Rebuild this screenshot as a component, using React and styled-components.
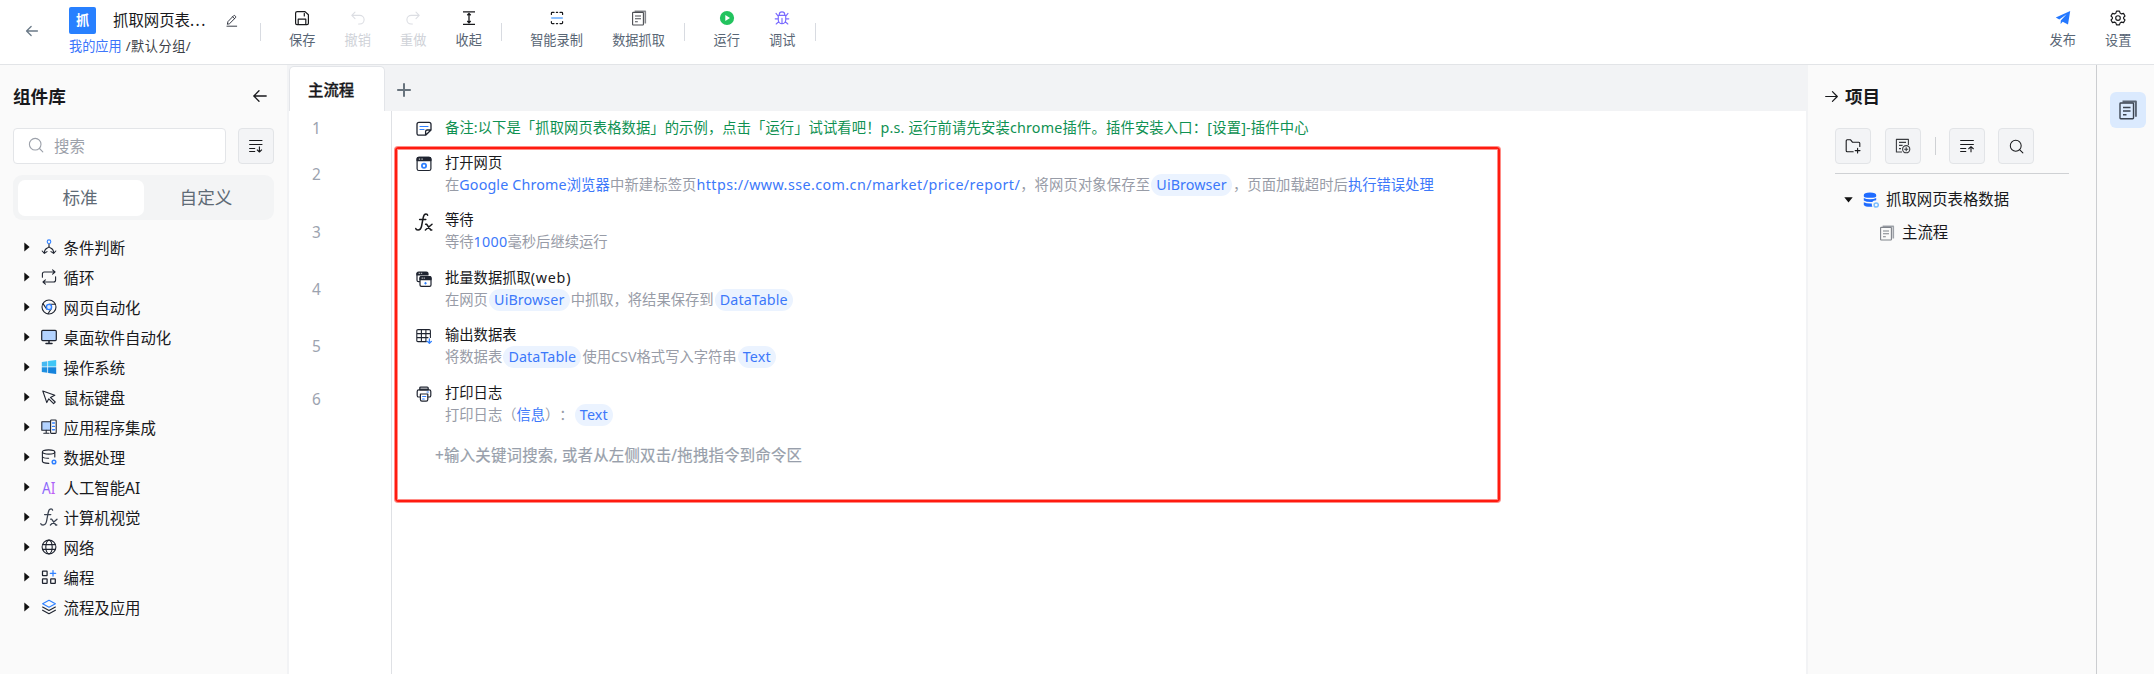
import React from "react";
import styled, { createGlobalStyle } from "styled-components";

const GlobalStyle = createGlobalStyle`
  * { box-sizing: border-box; }
  body {
    margin: 0;
    overflow: hidden;
    background: #fff;
    color: #18191c;
    font-family: "Noto Sans", "Noto Sans CJK SC", sans-serif;
    font-size: 15.4px;
    text-spacing-trim: space-all;
  }
  svg { display: block; flex: none; }
`;

const ink = "#1f2430";
const blue = "#2f80ff";

/* ---------- icons ---------- */

const Svg = ({ size = 16, box = 16, children, ...rest }) => (
  <svg
    width={size}
    height={size}
    viewBox={`0 0 ${box} ${box}`}
    fill="none"
    stroke="currentColor"
    strokeWidth="1.1"
    strokeLinecap="round"
    strokeLinejoin="round"
    {...rest}
  >
    {children}
  </svg>
);

const ArrowLeft = (p) => (
  <Svg {...p}><path d="M14.2 8H2M7 2.8L1.8 8L7 13.2" /></Svg>
);
const ArrowRight = (p) => (
  <Svg {...p}><path d="M1.8 8H14M9 2.8L14.2 8L9 13.2" /></Svg>
);
const PencilIcon = () => (
  <Svg size={13} stroke={ink}>
    <path d="M3 12.2L3.6 9.4L10.6 2.1Q11.4 1.4 12.2 2.1L13 2.9Q13.7 3.7 13 4.5L5.9 11.6Z M9.4 3.4L11.8 5.8M2.4 15H14.4" />
  </Svg>
);
const SaveIcon = () => (
  <Svg stroke="#18191c" strokeWidth="1.2">
    <path d="M3.2 1.6H11L14.4 4.8V13.2Q14.4 14.6 13 14.6H3Q1.6 14.6 1.6 13.2V3Q1.6 1.6 3.2 1.6Z" />
    <path d="M4.2 14.4V9.2H11.8V14.4M10.3 3.4V6" />
  </Svg>
);
const UndoIcon = () => (
  <Svg stroke="#dcdee3"><path d="M5 2.2L1.8 5.4L5 8.6M2 5.4H9.8A4.3 4.3 0 0 1 9.8 14H8.6" /></Svg>
);
const RedoIcon = () => (
  <Svg stroke="#dcdee3"><path d="M11 2.2L14.2 5.4L11 8.6M14 5.4H6.2A4.3 4.3 0 0 0 6.2 14H7.4" /></Svg>
);
const CollapseIcon = () => (
  <Svg stroke="#18191c" strokeWidth="1.3" strokeLinecap="butt">
    <path d="M2 1.8H14M2 14.4H14M8 3.4V12.8M6.3 5.2L8 3.4L9.7 5.2M6.3 11L8 12.8L9.7 11" />
  </Svg>
);
const RecordIcon = () => (
  <Svg stroke="#18191c" strokeWidth="1.2">
    <path d="M2.4 4.4V3.2Q2.4 2.4 3.2 2.4H5M11 2.4H12.8Q13.6 2.4 13.6 3.2V4.4M2.4 11.6V12.8Q2.4 13.6 3.2 13.6H5M11 13.6H12.8Q13.6 13.6 13.6 12.8V11.6M7.4 2.4H8.6M7.4 13.6H8.6" />
    <path d="M3 8H13" stroke="#8cc0ff" strokeWidth="2.2" />
  </Svg>
);
const DocsIcon = ({ size = 16, color = "#4b4d52", shade = "#85878c" }) => (
  <Svg size={size} stroke={color} strokeLinecap="butt" strokeWidth="1.1">
    <path d="M3.6 1.2H14.3V13.4" stroke={shade} strokeWidth="1.6" />
    <rect x="1.6" y="2.4" width="10.8" height="12.6" rx="0.6" />
    <path d="M4 6H10M4 8.8H10M4 11.8H6.8" />
  </Svg>
);
const PlayIcon = () => (
  <Svg stroke="none"><circle cx="8" cy="8" r="7.1" fill="#22c35e" /><path d="M6.3 4.9L11 8L6.3 11.1Z" fill="#fff" /></Svg>
);
const BugIcon = () => (
  <Svg stroke="#7a6bff" strokeWidth="1.15">
    <path d="M5.3 5V4.6A2.7 2.7 0 0 1 10.7 4.6V5M4.3 5.4H11.7V10A3.7 3.7 0 0 1 4.3 10ZM8 8.4V13.6M4.2 8.8H1.2M14.8 8.8H11.8M4.2 6.2L2 3.4M11.8 6.2L14 3.4M4.8 11.6L2.2 14M11.2 11.6L13.8 14" />
  </Svg>
);
const SendIcon = () => (
  <Svg stroke="none"><path d="M15.2 1L0.8 7.4L4.3 9.6L11.6 4.3L5.8 10.4L5.6 14L7.7 11.8L13 14.4Z" fill="#2478ff" /></Svg>
);
const GearIcon = () => (
  <Svg stroke="#18191c" strokeWidth="1.15">
    <path d="M6.5 1.1H9.5L10.1 3.1L11.5 3.9L13.5 3.4L15 6L13.6 7.4V8.6L15 10L13.5 12.6L11.5 12.1L10.1 12.9L9.5 14.9H6.5L5.9 12.9L4.5 12.1L2.5 12.6L1 10L2.4 8.6V7.4L1 6L2.5 3.4L4.5 3.9L5.9 3.1Z" />
    <circle cx="8" cy="8" r="2.3" />
  </Svg>
);
const SearchIcon = (p) => (
  <Svg {...p}><circle cx="7.2" cy="7.2" r="5.8" /><path d="M11.5 11.5L14.8 14.8" /></Svg>
);
const SortDownIcon = () => (
  <Svg stroke="#18191c" strokeLinecap="butt">
    <path d="M1.2 2.5H14.4M1.2 6.5H14.4M1.2 10.5H7.2M1.2 13.5H7.2M11.4 8.4V14M8.9 11.6L11.4 14L13.9 11.6" />
  </Svg>
);
const SortUpIcon = () => (
  <Svg stroke="#18191c" strokeLinecap="butt">
    <path d="M1.2 2.5H14.8M1.2 6.5H14.8M1.2 10.5H7.2M1.2 13.5H7.2M12 14.2V8.6M9.4 11L12 8.6L14.6 11" />
  </Svg>
);
const FolderPlusIcon = () => (
  <Svg stroke="#18191c">
    <path d="M8.2 13.8H2.2Q1.2 13.8 1.2 12.8V2.8Q1.2 1.8 2.2 1.8H5.6L7.4 4.2H13.8Q14.8 4.2 14.8 5.2V8.4M12.6 10.2V15M10.2 12.6H15" />
  </Svg>
);
const DocPlusIcon = () => (
  <Svg stroke="#3a3c40" strokeLinecap="butt">
    <path d="M7 14H1.4V1.4H13.4V7M4 4.4H11M4 7.4H7.6M4 10.6H6" />
    <circle cx="11.2" cy="11.2" r="3.6" />
    <path d="M9.2 11.2H13.2M11.2 9.2V13.2" />
  </Svg>
);
const DatabaseIcon = () => (
  <Svg stroke="none">
    <path d="M0.8 3Q0.8 0.4 7 0.4T13.2 3V4.2Q13.2 5.8 7 5.8T0.8 4.2Z M0.8 6Q3 7.2 7 7.2T13.2 6V8.2Q10 8.2 9.2 10Q3.4 10.2 0.8 8.4Z M0.8 10.2Q3.6 11.6 8.8 11.4Q8.6 13.4 9.4 14.8Q2 15.2 0.8 13Z" fill="#1f6bff" />
    <circle cx="13.2" cy="13" r="2.1" stroke="#79bdff" strokeWidth="1.5" fill="none" />
  </Svg>
);

const BranchIcon = () => (
  <Svg stroke={ink}>
    <path d="M8 4.8V7.2Q8 8.4 6.4 9Q3.4 10.2 3.4 13.8M8 7.2Q8 8.4 9.6 9Q12.6 10.2 12.6 13.8M1.2 12L3.4 14.4L6 12.6M10 12.6L12.6 14.4L14.8 12" />
    <circle cx="8" cy="2.7" r="1.8" stroke={blue} />
  </Svg>
);
const LoopIcon = () => (
  <Svg stroke={ink}>
    <path d="M1.4 8.2V5Q1.4 3 3.4 3H13.8M11.6 0.9L14 3L11.6 5.2M14.6 7.8V11Q14.6 13 12.6 13H2.2M4.4 10.8L2 13L4.4 15.1" />
  </Svg>
);
const ChromeIcon = () => (
  <Svg stroke={ink}>
    <circle cx="8" cy="8" r="7" />
    <path d="M2 4.6L5.6 10M14.4 5.3H8M7 14.8L10.3 9.6" />
    <circle cx="8" cy="8" r="2.6" stroke={blue} strokeWidth="1.4" fill="#dbeaff" />
  </Svg>
);
const MonitorIcon = () => (
  <Svg stroke={ink} strokeWidth="1.2">
    <rect x="0.7" y="1.4" width="14.6" height="10.2" rx="1" fill="#b3d3ff" />
    <path d="M8 12V14.2M5 14.4H11" strokeWidth="1.5" />
  </Svg>
);
const WindowsIcon = () => (
  <Svg stroke="none">
    <path d="M0.8 3L6.3 2.2V7.6H0.8Z" fill="#45b9f2" />
    <path d="M7.1 2.1L15.2 1V7.6H7.1Z" fill="#3fc6f6" />
    <path d="M0.8 8.3H6.3V13.8L0.8 13Z" fill="#1e8fe0" />
    <path d="M7.1 8.3H15.2V15L7.1 13.9Z" fill="#1583dc" />
  </Svg>
);
const CursorIcon = () => (
  <Svg stroke={ink}><path d="M1.8 2L13.8 6.2L9.4 8.4L14.2 13L12.6 14.6L7.8 9.8L5.8 13.6Z" /></Svg>
);
const AppsIcon = () => (
  <Svg stroke={ink}>
    <path d="M9.4 11.2H0.8V2.8H9.4" fill="#b3d3ff" />
    <path d="M5.2 11.4V14M2.8 14.2H8" />
    <rect x="9.6" y="1" width="5.6" height="13.4" rx="0.8" />
    <path d="M11.6 4H13.4M11.6 7.4H13.4M11.6 10.8H13.4" stroke={blue} strokeWidth="1.4" />
  </Svg>
);
const DataIcon = () => (
  <Svg stroke={ink}>
    <ellipse cx="7.6" cy="3" rx="6.2" ry="2.1" />
    <path d="M1.4 3V12.4Q1.6 14 7.8 14.4M13.8 3V8M1.4 7.6Q2.2 9.4 7.6 9.2" />
    <circle cx="13" cy="13" r="1.8" stroke={blue} strokeWidth="1.5" />
  </Svg>
);
const AiIcon = () => (
  <svg width="16" height="28" viewBox="0 0 16 28">
    <defs>
      <linearGradient id="ai" x1="0" y1="0" x2="1" y2="0.6">
        <stop offset="0" stopColor="#5b6cff" />
        <stop offset="1" stopColor="#c45cf5" />
      </linearGradient>
    </defs>
    <text x="1" y="20.5" fontSize="17" textLength="13.4" lengthAdjust="spacingAndGlyphs" fill="url(#ai)" fontFamily="Noto Sans, sans-serif">AI</text>
  </svg>
);
const FunctionIcon = ({ color = "#18191c", width = 1.5, ...rest }) => (
  <Svg size={18} box={18} stroke={color} strokeWidth={width} {...rest}>
    <path d="M12.6 2.2Q12.4 0.9 11 0.9Q8.9 0.9 8.2 4.6L6.6 13Q5.8 17 3 17Q1 17 0.8 15.6M4.6 6.6H10.8" />
    <path d="M10.6 11.2H11.6L15.8 17H16.8M17 11.2L10.4 17" />
  </Svg>
);
const GlobeIcon = () => (
  <Svg stroke={ink}>
    <circle cx="8" cy="8" r="6.9" />
    <ellipse cx="8" cy="8" rx="3.2" ry="6.9" />
    <path d="M1.6 5.6H14.4M1.6 10.4H14.4" />
  </Svg>
);
const BlocksIcon = () => (
  <Svg stroke={ink} strokeWidth="1.25">
    <rect x="1.5" y="2" width="4.6" height="4.6" rx="0.4" />
    <rect x="1.5" y="9.8" width="4.6" height="4.6" rx="0.4" />
    <rect x="9.7" y="9.8" width="4.6" height="4.6" rx="0.4" />
    <path d="M12 1.6V7M9.3 4.3H14.7" stroke={blue} />
  </Svg>
);
const LayersIcon = () => (
  <Svg stroke={ink}>
    <path d="M8 1.2L14.4 4.7L8 8.2L1.6 4.7Z" stroke={blue} />
    <path d="M1.6 8L8 11.5L14.4 8M1.6 11.2L8 14.7L14.4 11.2" />
  </Svg>
);

const NoteIcon = () => (
  <Svg stroke={ink} strokeWidth="1.3">
    <path d="M9.6 14.2H3Q1 14.2 1 12.2V3.4Q1 1.4 3 1.4H13Q15 1.4 15 3.4V9L9.6 14.2Z M9.6 14V10.6Q9.6 9 11.2 9H14.8" />
    <path d="M4 5.5H12M4 8.5H8" stroke={blue} strokeWidth="1.2" />
  </Svg>
);
const WebPageIcon = () => (
  <Svg stroke={ink} strokeWidth="1.2">
    <rect x="1.1" y="1.3" width="13.8" height="13.2" rx="1.8" />
    <path d="M1.1 4.6V3Q1.1 1.3 2.9 1.3H13.1Q14.9 1.3 14.9 3V4.6Z" fill={ink} />
    <path d="M3.2 3.1H3.8M5.8 3.1H6.4" stroke="#fff" strokeWidth="0.9" />
    <circle cx="8" cy="9.8" r="2.1" stroke={blue} strokeWidth="1.8" />
  </Svg>
);
const BatchIcon = () => (
  <Svg stroke={ink} strokeWidth="1.2">
    <path d="M3.6 10.6H2.6Q1 10.6 1 9.2V2.4" />
    <path d="M1 3.9V2.4Q1 1 2.6 1H10.4Q12 1 12 2.4V3.9Z" fill={ink} />
    <rect x="4" y="5.6" width="11" height="9.8" rx="1.4" fill="#fff" />
    <path d="M4 8.6V7Q4 5.6 5.4 5.6H13.4Q15 5.6 15 7V8.6Z" fill={ink} />
    <path d="M3 2.3H3.6M5.2 2.3H5.8M6 7.1H6.6M8 7.1H8.6" stroke="#fff" strokeWidth="0.8" />
    <path d="M9.5 10.8L10.9 12.3L9.5 13.7L8.1 12.3Z" stroke="none" fill={blue} />
  </Svg>
);
const TableIcon = () => (
  <Svg stroke={ink} strokeWidth="1.1">
    <path d="M10.4 13.6H2Q0.8 13.6 0.8 12.4V2.8Q0.8 1.6 2 1.6H13.2Q14.4 1.6 14.4 2.8V9.4M0.8 5.6H14.4M0.8 9.6H12M5.4 1.6V13.4M9.9 1.6V13.4" />
    <path d="M13.4 10.8V15.2M11.4 13.4L13.4 15.3L15.4 13.4" stroke={blue} strokeWidth="1.3" />
  </Svg>
);
const PrinterIcon = () => (
  <Svg stroke={ink} strokeWidth="1.2">
    <path d="M3.8 3.8V2Q3.8 1 4.8 1H11.2Q12.2 1 12.2 2V3.8Z" fill="#9a9ca3" />
    <path d="M4 11H2.8Q1.2 11 1.2 9.4V5.4Q1.2 3.8 2.8 3.8H13.2Q14.8 3.8 14.8 5.4V9.4Q14.8 11 13.2 11H12" />
    <path d="M4.4 8H11.8V13.6Q11.8 15.2 10.2 15.2H6Q4.4 15.2 4.4 13.6Z" />
    <path d="M6.6 10.5H9.8M6.6 13H8.2M11 6H12.4" stroke={blue} strokeWidth="1.1" />
  </Svg>
);

/* ---------- layout ---------- */

const Page = styled.div`
  height: 100vh;
  min-height: 674px;
  display: flex;
  flex-direction: column;
`;

const Header = styled.header`
  height: 65px;
  flex: none;
  display: flex;
  align-items: flex-start;
  padding: 0 8px 0 25px;
  border-bottom: 1px solid #e2e4e7;
`;

const BackButton = styled.div`
  width: 44px;
  padding-top: 24px;
  color: #6b7a88;
`;

const Identity = styled.div`
  width: 191px;
  padding-top: 7px;
`;

const TitleRow = styled.div`
  height: 27px;
  display: flex;
  align-items: center;
`;

const Logo = styled.div`
  width: 27px;
  height: 27px;
  border-radius: 2px;
  background: #2880ff;
  color: #fff;
  font-size: 13.2px;
  font-weight: 700;
  line-height: 26px;
  text-align: center;
`;

const AppTitle = styled.div`
  width: 112px;
  margin-left: 17px;
  line-height: 27px;
`;

const Dots = styled.span`
  letter-spacing: 1.5px;
`;

const Breadcrumb = styled.div`
  margin-top: 3px;
  font-size: 13.2px;
  line-height: 19px;
  color: #3c4046;
  white-space: pre;
  letter-spacing: 0.5px;
`;

const Link = styled.span`
  color: #3d76fb;
  letter-spacing: 0;
`;

const Divider = styled.div`
  width: 1px;
  height: 18px;
  margin: 23px ${(p) => p.$after ?? 14}px 0 ${(p) => p.$before ?? 4}px;
  background: #d8dbe1;
`;

const ToolButton = styled.div`
  width: ${(p) => (p.$wide ? 82 : 55.5)}px;
  padding-top: 10px;
  display: flex;
  flex-direction: column;
  align-items: center;
  gap: 5px;
  font-size: 13.2px;
  line-height: 19px;
  white-space: nowrap;
  color: ${(p) => (p.$disabled ? "#cfd2d8" : "#596675")};
`;

const Spacer = styled.div`
  flex: 1;
`;

const Body = styled.div`
  flex: 1;
  min-height: 0;
  display: grid;
  grid-template-columns: 289px 1fr 290px 58px;
`;

const Library = styled.aside`
  padding: 16px 13px 0;
  background: #fafafa;
  border-right: 2px solid #f2f3f5;
`;

const PanelHead = styled.div`
  height: 30px;
  display: flex;
  align-items: center;
  justify-content: ${(p) => (p.$spread ? "space-between" : "flex-start")};
  gap: 6px;
  padding-right: ${(p) => (p.$spread ? 6 : 0)}px;
`;

const PanelTitle = styled.h2`
  margin: 0;
  font-size: 17.6px;
  line-height: 30px;
  font-weight: 700;
`;

const SearchRow = styled.div`
  margin-top: 17px;
  display: flex;
  gap: 12px;
`;

const SearchBox = styled.div`
  width: 213px;
  height: 36px;
  padding: 0 0 2px 14px;
  display: flex;
  align-items: center;
  gap: 10px;
  border: 1px solid #e3e5e8;
  border-radius: 4px;
  background: #fff;
  color: #9ca1aa;
`;

const IconButton = styled.div`
  width: 36px;
  height: 36px;
  display: flex;
  flex: none;
  align-items: center;
  justify-content: center;
  border: 1px solid #e2e4e7;
  border-radius: 4px;
  background: #f3f4f6;
`;

const Segmented = styled.div`
  width: 261px;
  height: 45px;
  margin-top: 11px;
  padding: 5px 4px 4px 5px;
  display: flex;
  border-radius: 9px;
  background: #f3f4f5;
`;

const Segment = styled.div`
  flex: 1;
  padding-right: 2px;
  border-radius: 7px;
  background: ${(p) => (p.$active ? "#fff" : "transparent")};
  color: #5f6b76;
  font-size: 17.6px;
  line-height: 35px;
  text-align: center;
`;

const CategoryList = styled.ul`
  margin: 12px 0 0;
  padding: 0;
  list-style: none;
`;

const Category = styled.li`
  height: 30px;
  display: flex;
  align-items: center;
  padding-left: 10.5px;
`;

const CategoryIcon = styled.div`
  width: 18px;
  margin: 0 5.5px 0 10.5px;
  display: flex;
  justify-content: center;
`;

const Workspace = styled.main`
  min-width: 0;
  display: flex;
  flex-direction: column;
`;

const TabBar = styled.div`
  height: 46px;
  flex: none;
  display: flex;
  align-items: flex-end;
  background: #f2f3f5;
`;

const Tab = styled.div`
  width: 96px;
  height: 45px;
  padding-left: 18px;
  border: 1px solid #e3e5e9;
  border-bottom: 0;
  border-radius: 5px 5px 0 0;
  background: #fff;
  font-weight: 500;
  line-height: 47px;
  -webkit-text-stroke: 0.3px #18191c;
`;

const AddTab = styled.div`
  padding: 0 0 13px 11px;
  color: #68737d;
`;

const Editor = styled.div`
  flex: 1;
  display: flex;
`;

const Gutter = styled.div`
  width: 103px;
  border-right: 1px solid #dfe1e5;
`;

const LineNumber = styled.div`
  height: ${(p) => p.$h}px;
  width: 55px;
  padding-bottom: 1px;
  display: flex;
  align-items: center;
  justify-content: center;
  color: #9ca3af;
`;

const Commands = styled.div`
  flex: 1;
  position: relative;
  padding-left: 24px;
  font-size: 14.3px;
`;

const Highlight = styled.div`
  position: absolute;
  left: 3px;
  top: 36px;
  width: 1105px;
  height: 355px;
  border: 2px solid #ff1b10;
  border-radius: 3px;
  box-shadow: 0 0 0 1px rgba(255, 27, 16, 0.5), inset 0 0 0 1px rgba(255, 27, 16, 0.5);
  pointer-events: none;
`;

const NoteRow = styled.div`
  height: 35px;
  display: flex;
  align-items: center;
  gap: 13px;
  color: #0f9152;
`;

const NoteText = styled.div`
  line-height: 20px;
  padding-bottom: 2px;
`;

const Track = styled.span`
  letter-spacing: ${(p) => p.$by}px;
`;

const CommandRow = styled.div`
  height: 57.4px;
  padding-top: 6px;
  display: flex;
  gap: 13px;
`;

const CommandIcon = styled.div`
  width: 16px;
  padding-top: 4px;
  display: flex;
  justify-content: center;
  align-items: flex-start;
`;

const CommandTitle = styled.div`
  line-height: 22px;
`;

const CommandText = styled.div`
  display: flex;
  align-items: center;
  line-height: 22px;
  white-space: pre;
  color: #989ca7;
`;

const Accent = styled.span`
  color: #3c78fa;
  letter-spacing: ${(p) => p.$track ?? 0}px;
`;

const Variable = styled.span`
  height: 22px;
  margin: 0 1px;
  padding: 0 5.2px;
  border-radius: 11px;
  background: #ebf3ff;
  color: #3c78fa;
  letter-spacing: 0.1px;
`;

const CommandInput = styled.div`
  margin: 11px 0 0 19px;
  font-size: 15.4px;
  line-height: 24px;
  letter-spacing: 0.23px;
  color: #989fab;
  -webkit-text-stroke: 0.2px #989fab;
`;

const Project = styled.aside`
  padding: 16px 0 0 16px;
  border-left: 2px solid #f2f3f5;
  background: #fafafa;
`;

const ProjectTools = styled.div`
  width: 234px;
  height: 46px;
  margin: 17px 0 0 11px;
  display: flex;
  border-bottom: 1px solid #cfd1d4;
`;

const ToolGap = styled.div`
  width: ${(p) => p.$w}px;
  display: flex;
  justify-content: center;
  align-items: flex-start;
`;

const ToolRule = styled.div`
  width: 1px;
  height: 18px;
  margin-top: 9px;
  background: #cfd1d4;
`;

const TreeItem = styled.div`
  height: ${(p) => p.$h ?? 32}px;
  display: flex;
  align-items: center;
  padding-left: ${(p) => p.$indent}px;
  gap: ${(p) => p.$gap}px;
  span { line-height: 32px; }
`;

const Tree = styled.div`
  padding-top: 10px;
`;

const Rail = styled.nav`
  padding: 27px 0 0 13px;
  border-left: 1px solid #cbcdd0;
  background: #fafafa;
`;

const RailButton = styled.div`
  width: 36px;
  height: 36px;
  display: flex;
  align-items: center;
  justify-content: center;
  border-radius: 6px;
  background: #dbeafe;
`;

const Caret = ({ open }) =>
  open ? (
    <svg width="9" height="6" viewBox="0 0 9 6"><path d="M0.3 0.3H8.7L4.5 5.6Z" fill="#111" /></svg>
  ) : (
    <svg width="6" height="10" viewBox="0 0 6 10"><path d="M0.3 0.6V9.4L5.6 5Z" fill="#111" /></svg>
  );

const VisionIcon = () => <FunctionIcon color="#3a4250" width={1.3} />;

const categories = [
  [BranchIcon, "条件判断"],
  [LoopIcon, "循环"],
  [ChromeIcon, "网页自动化"],
  [MonitorIcon, "桌面软件自动化"],
  [WindowsIcon, "操作系统"],
  [CursorIcon, "鼠标键盘"],
  [AppsIcon, "应用程序集成"],
  [DataIcon, "数据处理"],
  [AiIcon, "人工智能AI"],
  [VisionIcon, "计算机视觉"],
  [GlobeIcon, "网络"],
  [BlocksIcon, "编程"],
  [LayersIcon, "流程及应用"],
];

const lineHeights = [35, 58, 57.4, 57.4, 57.4, 48];

const Tool = ({ icon: Icon, label, ...rest }) => (
  <ToolButton {...rest}><Icon />{label}</ToolButton>
);

const Command = ({ icon: Icon, title, children }) => (
  <CommandRow>
    <CommandIcon><Icon /></CommandIcon>
    <div>
      <CommandTitle>{title}</CommandTitle>
      <CommandText>{children}</CommandText>
    </div>
  </CommandRow>
);

export default function App() {
  return (
    <Page>
      <GlobalStyle />
      <Header>
        <BackButton><ArrowLeft size={14} strokeWidth="1.5" /></BackButton>
        <Identity>
          <TitleRow>
            <Logo>抓</Logo>
            <AppTitle>抓取网页表<Dots>...</Dots></AppTitle>
            <PencilIcon />
          </TitleRow>
          <Breadcrumb><Link>我的应用</Link> /默认分组/</Breadcrumb>
        </Identity>
        <Divider $before={0} $after={13.5} />
        <Tool icon={SaveIcon} label="保存" />
        <Tool icon={UndoIcon} label="撤销" $disabled />
        <Tool icon={RedoIcon} label="重做" $disabled />
        <Tool icon={CollapseIcon} label="收起" />
        <Divider $before={4.5} $after={13.5} />
        <Tool icon={RecordIcon} label="智能录制" $wide />
        <Tool icon={DocsIcon} label="数据抓取" $wide />
        <Divider $after={14.5} />
        <Tool icon={PlayIcon} label="运行" />
        <Tool icon={BugIcon} label="调试" />
        <Divider $before={4.5} />
        <Spacer />
        <Tool icon={SendIcon} label="发布" />
        <Tool icon={GearIcon} label="设置" />
      </Header>

      <Body>
        <Library>
          <PanelHead $spread>
            <PanelTitle>组件库</PanelTitle>
            <ArrowLeft size={16} strokeWidth="1.3" />
          </PanelHead>
          <SearchRow>
            <SearchBox><SearchIcon stroke="#9ca1aa" />搜索</SearchBox>
            <IconButton><SortDownIcon /></IconButton>
          </SearchRow>
          <Segmented>
            <Segment $active>标准</Segment>
            <Segment>自定义</Segment>
          </Segmented>
          <CategoryList>
            {categories.map(([Icon, label]) => (
              <Category key={label}>
                <Caret />
                <CategoryIcon><Icon /></CategoryIcon>
                {label}
              </Category>
            ))}
          </CategoryList>
        </Library>

        <Workspace>
          <TabBar>
            <Tab>主流程</Tab>
            <AddTab><Svg strokeWidth="2" strokeLinecap="butt"><path d="M8 1.2V14.8M1.2 8H14.8" /></Svg></AddTab>
          </TabBar>
          <Editor>
            <Gutter>
              {lineHeights.map((h, i) => <LineNumber key={i} $h={h}>{i + 1}</LineNumber>)}
            </Gutter>
            <Commands>
              <NoteRow>
                <NoteIcon />
                <NoteText>
                  <Track $by={0.09}>备注:以下是「抓取网页表格数据」的示例，点击「运行」试试看吧！</Track>
                  <Track $by={0.19}>p.s. 运行前请先安装chrome插件。插件安装入口：[设置]-插件中心</Track>
                </NoteText>
              </NoteRow>
              <Command icon={WebPageIcon} title="打开网页">
                在<Accent $track={0.14}>Google Chrome浏览器</Accent><Track $by={0.12}>中新建标签页</Track>
                <Accent $track={0.43}>https://www.sse.com.cn/market/price/report/</Accent>
                <Track $by={0.15}>，将网页对象保存至</Track>
                <Variable>UiBrowser</Variable><Track $by={0.08}>，页面加载超时后</Track><Accent>执行错误处理</Accent>
              </Command>
              <Command icon={FunctionIcon} title="等待">
                等待<Accent $track={0.3}>1000</Accent>毫秒后继续运行
              </Command>
              <Command icon={BatchIcon} title={<>批量数据抓取<Track $by={0.75}>(web)</Track></>}>
                在网页<Variable>UiBrowser</Variable>中抓取，将结果保存到<Variable>DataTable</Variable>
              </Command>
              <Command icon={TableIcon} title="输出数据表">
                将数据表<Variable>DataTable</Variable>使用CSV格式写入字符串<Variable>Text</Variable>
              </Command>
              <Command icon={PrinterIcon} title="打印日志">
                打印日志（<Accent>信息</Accent>）：<Variable>Text</Variable>
              </Command>
              <CommandInput>+输入关键词搜索, 或者从左侧双击/拖拽指令到命令区</CommandInput>
              <Highlight />
            </Commands>
          </Editor>
        </Workspace>

        <Project>
          <PanelHead>
            <ArrowRight size={15} strokeWidth="1.3" />
            <PanelTitle>项目</PanelTitle>
          </PanelHead>
          <ProjectTools>
            <IconButton><FolderPlusIcon /></IconButton>
            <ToolGap $w={14} />
            <IconButton><DocPlusIcon /></IconButton>
            <ToolGap $w={28}><ToolRule /></ToolGap>
            <IconButton><SortUpIcon /></IconButton>
            <ToolGap $w={13} />
            <IconButton><SearchIcon stroke="#18191c" size={15} /></IconButton>
          </ProjectTools>
          <Tree>
            <TreeItem $indent={20} $gap={8}>
              <Caret open />
              <TreeItem $indent={2} $gap={7}><DatabaseIcon /><span>抓取网页表格数据</span></TreeItem>
            </TreeItem>
            <TreeItem $indent={55} $gap={7} $h={33}>
              <DocsIcon color="#7f838a" shade="#9da1a8" /><span>主流程</span>
            </TreeItem>
          </Tree>
        </Project>

        <Rail>
          <RailButton><DocsIcon size={20} color="#3b4350" shade="#5b6574" /></RailButton>
        </Rail>
      </Body>
    </Page>
  );
}
